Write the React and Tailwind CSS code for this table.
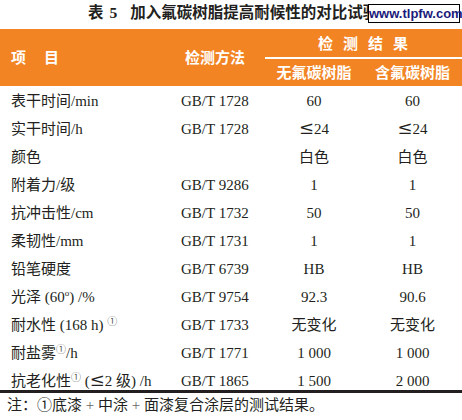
import React from "react";

const Le = () => (
  <span
    style={{ fontFamily: '"DejaVu Serif", serif', lineHeight: 0 }}
    className="text-[18px] relative top-[0px]"
  >
    ≤
  </span>
);

const rows = [
  { item: <>表干时间/min</>, m: "GB/T 1728", a: "60", b: "60" },
  { item: <>实干时间/h</>, m: "GB/T 1728", a: <><Le />24</>, b: <><Le />24</> },
  { item: <>颜色</>, m: "", a: "白色", b: "白色" },
  { item: <>附着力/级</>, m: "GB/T 9286", a: "1", b: "1" },
  { item: <>抗冲击性/cm</>, m: "GB/T 1732", a: "50", b: "50" },
  { item: <>柔韧性/mm</>, m: "GB/T 1731", a: "1", b: "1" },
  { item: <>铅笔硬度</>, m: "GB/T 6739", a: "HB", b: "HB" },
  {
    item: (
      <>
        光泽 (60<span className="text-[9px] relative top-[-6px]">o</span>) /%
      </>
    ),
    m: "GB/T 9754",
    a: "92.3",
    b: "90.6",
  },
  {
    item: (
      <>
        耐水性 (168 h) <sup className="text-[10px] text-[#555]">①</sup>
      </>
    ),
    m: "GB/T 1733",
    a: "无变化",
    b: "无变化",
  },
  {
    item: (
      <>
        耐盐雾<sup className="text-[10px] text-[#555]">①</sup>/h
      </>
    ),
    m: "GB/T 1771",
    a: "1 000",
    b: "1 000",
  },
  {
    item: (
      <>
        抗老化性<sup className="text-[10px] text-[#555]">①</sup> (<Le />2 级) /h
      </>
    ),
    m: "GB/T 1865",
    a: "1 500",
    b: "2 000",
  },
];

export default function App() {
  const font = {
    fontFamily: '"Liberation Serif", "Noto Sans CJK SC", serif',
  };
  return (
    <div
      className="w-[462px] h-[420px] bg-white text-[#231f20] overflow-hidden"
      style={font}
    >
      {/* title */}
      <div className="relative h-[29px]">
        <div className="pl-[88px] pt-[3px] text-[15.5px] font-bold leading-[20px] whitespace-nowrap">
          <span className="tracking-[1px]">表 5</span>
          <span className="ml-[12px]">加入氟碳树脂提高耐候性的对比试验</span>
        </div>
        <div
          className="absolute left-[368px] top-[4px] w-[92px] h-[19px] border border-black bg-white text-[#1a1a7a] text-[13px] font-bold leading-[17px] text-center"
          style={{ fontFamily: '"Liberation Sans", Arial, sans-serif' }}
        >
          www.tlpfw.com
        </div>
      </div>

      {/* header */}
      <div
        className="bg-[#f28424] text-white font-bold h-[57px] grid grid-cols-[181px_84px_98px_99px]"
        style={{ fontFamily: '"Noto Sans CJK SC", sans-serif' }}
      >
        <div className="row-span-2 flex items-center pl-[11px] text-[15px] gap-[18px]">
          <span>项</span>
          <span>目</span>
        </div>
        <div className="row-span-2 flex items-center pl-[4px] text-[15px]">
          检测方法
        </div>
        <div className="col-span-2 h-[30px] border-b-2 border-white flex items-center justify-center gap-[10px] text-[15px] pt-[1px] pr-[1px]">
          <span>检</span>
          <span>测</span>
          <span>结</span>
          <span>果</span>
        </div>
        <div className="flex items-center justify-center text-[15px] h-[27px]">
          无氟碳树脂
        </div>
        <div className="flex items-center justify-center text-[15px] h-[27px]">
          含氟碳树脂
        </div>
      </div>

      {/* body */}
      <div className="pt-[1px] h-[307px] border-b-[3px] border-[#231f20]">
        {rows.map((r, i) => (
          <div
            key={i}
            className="grid grid-cols-[181px_84px_98px_99px] h-[28px] items-center text-[15px] leading-none whitespace-nowrap"
          >
            <div className="pl-[11px]">{r.item}</div>
            <div>{r.m}</div>
            <div className="text-center">{r.a}</div>
            <div className="text-center">{r.b}</div>
          </div>
        ))}
      </div>

      {/* note */}
      <div className="pl-[7px] pt-[2px] text-[15px] leading-[20px] whitespace-nowrap">
        注：①底漆 <span className="text-[#666]">+</span> 中涂{" "}
        <span className="text-[#666]">+</span> 面漆复合涂层的测试结果。
      </div>
    </div>
  );
}
